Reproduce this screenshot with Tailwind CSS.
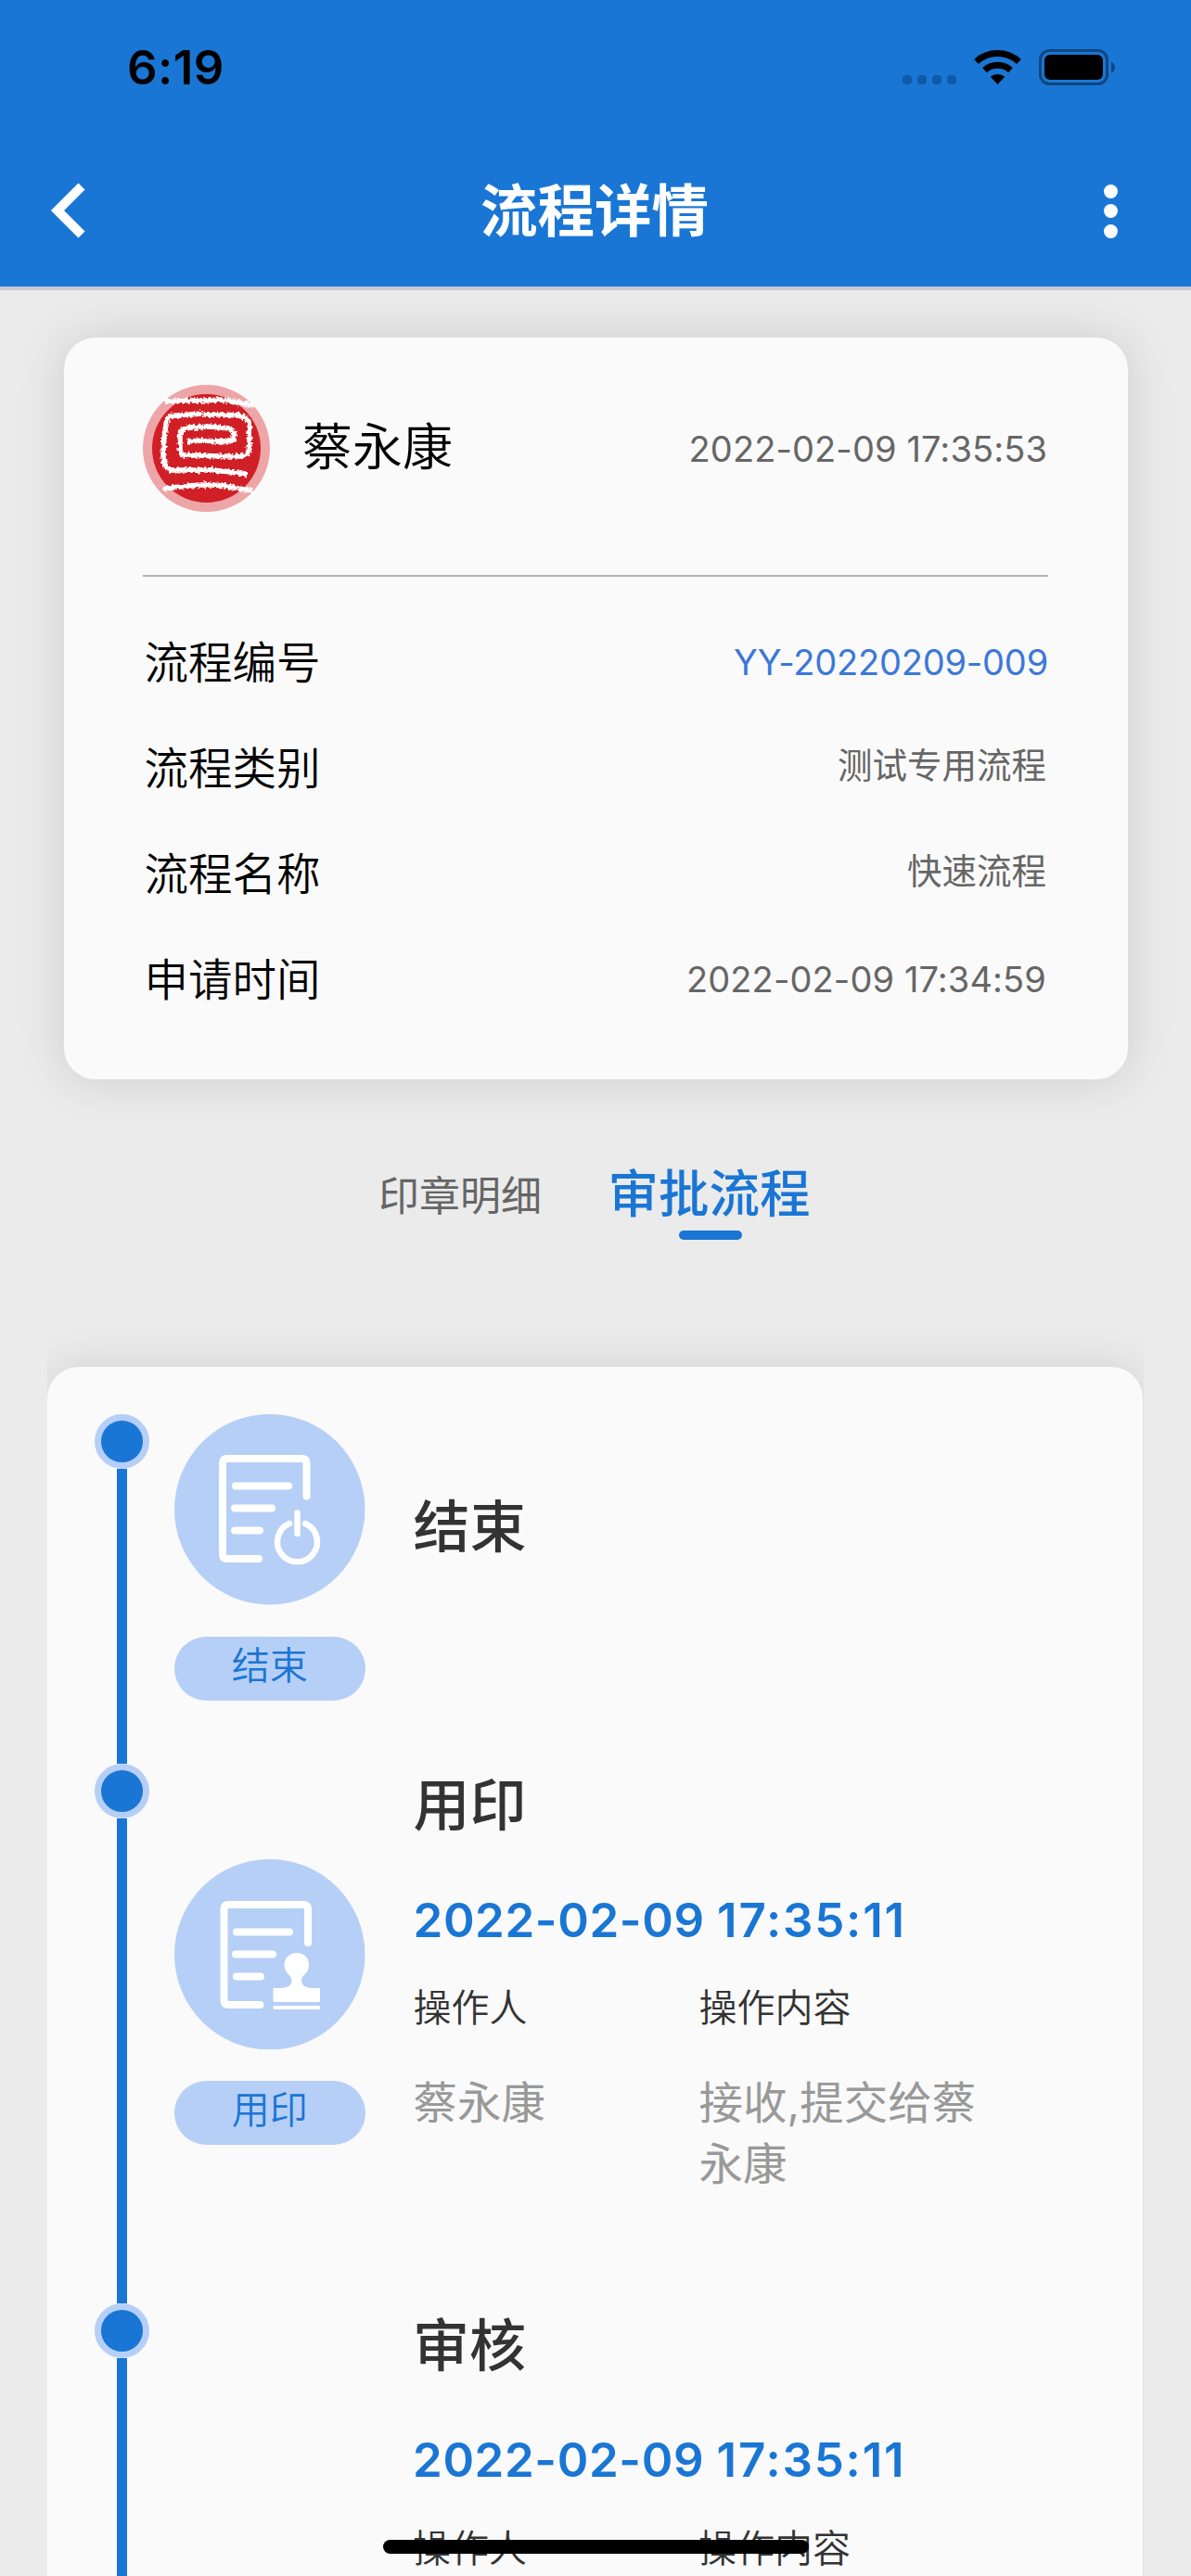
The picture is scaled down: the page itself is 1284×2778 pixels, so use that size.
<!DOCTYPE html>
<html lang="zh-CN">
<head>
<meta charset="utf-8">
<title>流程详情</title>
<script src="https://cdn.jsdelivr.net/npm/@tailwindcss/browser@4"></script>
</head>
<body class="bg-[#ebebeb]">
<div class="relative flex h-[2778px] w-[1284px] flex-col overflow-hidden bg-[#ebebeb] font-['Inter','Noto_Sans_CJK_SC',sans-serif] text-black">

  <header class="flex h-[313px] shrink-0 flex-col border-b-4 border-[#c7cad3] bg-[#1a76d4]">
    <div class="flex h-[146px] items-center justify-between pr-[81px] pl-[137px]">
      <span class="pb-px text-[51px] leading-none font-semibold tracking-[0.4px]">6:19</span>
      <svg class="h-[40px] w-[230px]" viewBox="0 0 230 40">
        <g fill="#0d5aa8"><rect y="28" width="10" height="10" rx="4"/><rect x="16" y="28" width="10" height="10" rx="4"/><rect x="32" y="28" width="10" height="10" rx="4"/><rect x="48" y="28" width="10" height="10" rx="4"/></g>
        <g fill="none" stroke="#000" stroke-width="7"><path d="M79.500 13.500a34 34 0 0 1 46 0"/><path d="M88.500 22.700a21 21 0 0 1 28 0"/></g>
        <path d="M102.500 38l-7.800-8.200a12 12 0 0 1 15.600 0z"/>
        <rect x="148.500" y="1.500" width="72" height="36" rx="10" fill="none" stroke="#104680" stroke-width="3"/>
        <rect x="153" y="6" width="63" height="27" rx="6"/>
        <path d="M225 13.500q4 2 4 6t-4 6z" fill="#104680"/>
      </svg>
    </div>
    <div class="grid h-[163px] grid-cols-[200px_1fr_200px] items-center">
      <svg class="mb-[2px] ml-[54px] h-[60px] w-[40px]" viewBox="0 0 40 60"><path d="M34 4L8 30l26 26" fill="none" stroke="#fff" stroke-width="10"/></svg>
      <h1 class="pr-[2px] text-center text-[61.500px] leading-none font-bold text-white">流程详情</h1>
      <div class="mr-[79px] flex flex-col gap-[6.500px] justify-self-end">
        <i class="size-[15px] rounded-full bg-white"></i><i class="size-[15px] rounded-full bg-white"></i><i class="size-[15px] rounded-full bg-white"></i>
      </div>
    </div>
  </header>

  <section class="mx-[68.500px] mt-[50.500px] flex h-[800px] shrink-0 flex-col rounded-[34px] bg-[#fafafa] px-[85.500px] pt-[51px] shadow-[0_0_51px_rgba(0,0,0,0.13)]">
    <div class="flex h-[137px] items-center">
      <svg class="size-[137px]" viewBox="0 0 137 137">
        <defs><filter id="rough" x="-5%" y="-5%" width="110%" height="110%"><feTurbulence type="fractalNoise" baseFrequency="0.35" numOctaves="2" seed="4"/><feDisplacementMap in="SourceGraphic" scale="6" xChannelSelector="R" yChannelSelector="G"/></filter></defs>
        <circle cx="68.500" cy="68.500" r="68.500" fill="#eda5a8"/>
        <circle cx="68.500" cy="68.500" r="58.500" fill="#d01f26"/>
        <g fill="none" stroke="#fff" stroke-width="5.500" stroke-linejoin="round" filter="url(#rough)">
          <path d="M24 18L45 17 65 17 85 16 103 19 119 22"/>
          <path d="M113 97L95 94 75 92 50 92 30 92Q23 90 22 78L23 55 26 38Q27 33 36 33L50 32 64 31M65 32L85 32 103 33Q114 35 115 43L115 60 114 72Q113 77 105 77L80 77 60 76 46 76Q40 75 40 68L40 54Q41 46 50 46L75 45 92 47Q99 49 98 56 98 61 92 61L82 61 66 60 48 61"/>
          <path d="M21 112L40 110 60 108 75 108 90 109 102 112M103 112L119 114"/>
        </g>
      </svg>
      <span class="ml-[35px] text-[54px] leading-none font-[350]">蔡永康</span>
      <span class="mr-[1px] ml-auto pt-px text-[38px] leading-none tracking-[0.1px] text-[#666]">2022-02-09 17:35:53</span>
    </div>
    <div class="mt-[68px] h-[2px] bg-[#b3b3b3]"></div>
    <dl class="mt-[36px] text-[38px] leading-none text-[#666]">
      <div class="flex h-[114px] items-center justify-between"><dt class="pl-[1.500px] text-[47.500px] font-[350] text-black">流程编号</dt><dd class="pb-[2px] tracking-[-0.2px] text-[#3b78d8]">YY-20220209-009</dd></div>
      <div class="flex h-[114px] items-center justify-between"><dt class="pl-[1.500px] text-[47.500px] font-[350] text-black">流程类别</dt><dd class="pr-[2px] pb-[5px] text-[37.500px]">测试专用流程</dd></div>
      <div class="flex h-[114px] items-center justify-between"><dt class="pl-[1.500px] text-[47.500px] font-[350] text-black">流程名称</dt><dd class="pr-[2px] pb-[5px] text-[37.500px]">快速流程</dd></div>
      <div class="flex h-[114px] items-center justify-between"><dt class="pl-[1.500px] text-[47.500px] font-[350] text-black">申请时间</dt><dd class="pr-[2px] pb-[2px] tracking-[0.1px]">2022-02-09 17:34:59</dd></div>
    </dl>
  </section>

  <nav class="flex h-[220px] shrink-0 pt-[85px] pl-[408px] leading-none">
    <span class="pt-[19px] text-[44px] text-[#666]">印章明细</span>
    <div class="ml-[71.500px] flex flex-col items-center text-[54.500px] font-medium text-[#1a76d4]"><span class="pt-[11px]">审批流程</span><i class="mt-[12.500px] ml-[3px] h-[10.500px] w-[68.500px] rounded-full bg-[#1a76d4]"></i></div>
  </nav>

  <div class="ml-[51px] h-[1395px] w-[1182px] shrink-0 overflow-hidden pt-[90.500px]">
    <ol class="h-[1500px] w-[1181px] rounded-t-[34px] bg-[#fafafa] pt-[51px] pl-[51px] text-[#333] shadow-[0_0_48px_rgba(0,0,0,0.11)]">
      <li class="flex h-[376.500px]">
        <div class="flex w-[59px] flex-col items-center">
          <i class="size-[59px] shrink-0 rounded-full border-[7px] border-[#b6cff7] bg-[#1a76d4]"></i>
          <i class="w-[10.500px] flex-1 bg-[#1a76d4]"></i>
        </div>
        <div class="ml-[27px] w-[205.500px]">
          <svg class="block size-[205.500px]" viewBox="0 0 205.500 205.500">
            <circle cx="102.750" cy="102.750" r="102.750" fill="#b6cff7"/>
            <g fill="none" stroke="#fff" stroke-width="8" stroke-linecap="round" stroke-linejoin="round">
              <path d="M142.500 88.500V53q0-5-5-5H57q-5 0-5 5v98q0 5 5 5h34"/>
              <path d="M66 77.500h57M65 101.500h40M65 125.500h27"/>
              <path d="M132.500 106.500v22.500M124 118a21.500 21.500 0 1 0 17 0" stroke-width="6.500"/>
            </g>
          </svg>
          <div class="mt-[34px] flex h-[69px] items-center justify-center rounded-full bg-[#b6cff7] pb-[5px] text-[41px] leading-none font-[350] text-[#1a76d4]">结束</div>
        </div>
        <h2 class="mt-[92px] ml-[52px] text-[61px] leading-none font-medium">结束</h2>
      </li>
      <li class="flex h-[582.500px]">
        <div class="flex w-[59px] flex-col items-center">
          <i class="size-[59px] shrink-0 rounded-full border-[7px] border-[#b6cff7] bg-[#1a76d4]"></i>
          <i class="w-[10.500px] flex-1 bg-[#1a76d4]"></i>
        </div>
        <div class="ml-[27px] w-[205.500px] pt-[103px]">
          <svg class="block size-[205.500px]" viewBox="0 0 205.500 205.500">
            <circle cx="102.750" cy="102.750" r="102.750" fill="#b6cff7"/>
            <g fill="none" stroke="#fff" stroke-width="8" stroke-linecap="round" stroke-linejoin="round">
              <path d="M144 90V54q0-5-5-5H58.500q-5 0-5 5v98q0 5 5 5h34"/>
              <path d="M67 78.500h57M66 102.500h40M67 126.500h26"/>
            </g>
            <path d="M132 101c8 0 13 5.500 13 13 0 10-8 10-8 17 0 6 6 8 13 8h6q1 0 1 1v13q0 1-1 1h-48.500q-1 0-1-1v-13q0-1 1-1h6c7 0 13-2 13-8 0-7-8-7-8-17 0-7.500 5.500-13 13.500-13z" fill="#fff"/>
            <rect x="106.500" y="158" width="50.500" height="4" rx="1.500" fill="#fff"/>
          </svg>
          <div class="mt-[34px] flex h-[69px] items-center justify-center rounded-full bg-[#b6cff7] pb-[6px] text-[41px] leading-none font-[350] text-[#1a76d4]">用印</div>
        </div>
        <div class="ml-[52px] w-[640px]">
          <h2 class="mt-[15px] text-[61px] leading-none font-medium">用印</h2>
          <p class="mt-[67px] text-[51px] leading-none font-semibold tracking-[0.600px] text-[#1a76d4]">2022-02-09 <span class="tracking-[1.800px]">17:35:11</span></p>
          <div class="mt-[49px] grid grid-cols-[308px_310px] text-[41px] leading-none font-[350]"><span>操作人</span><span>操作内容</span></div>
          <div class="mt-[49px] grid grid-cols-[308px_310px] text-[47.500px] leading-[66px] text-[#999]"><span>蔡永康</span><span>接收,提交给蔡永康</span></div>
        </div>
      </li>
      <li class="flex h-[582.500px]">
        <div class="flex w-[59px] flex-col items-center">
          <i class="size-[59px] shrink-0 rounded-full border-[7px] border-[#b6cff7] bg-[#1a76d4]"></i>
          <i class="w-[10.500px] flex-1 bg-[#1a76d4]"></i>
        </div>
        <div class="ml-[284px] w-[640px]">
          <h2 class="mt-[16px] text-[61px] leading-none font-medium">审核</h2>
          <p class="mt-[66px] text-[51px] leading-none font-semibold tracking-[0.600px] text-[#1a76d4]">2022-02-09 <span class="tracking-[1.800px]">17:35:11</span></p>
          <div class="mt-[50px] grid grid-cols-[308px_310px] text-[41px] leading-none font-[350]"><span>操作人</span><span>操作内容</span></div>
        </div>
      </li>
    </ol>
  </div>

  <div class="absolute top-[2739px] left-[413px] h-[15px] w-[459px] rounded-full bg-black"></div>
</div>
</body>
</html>
